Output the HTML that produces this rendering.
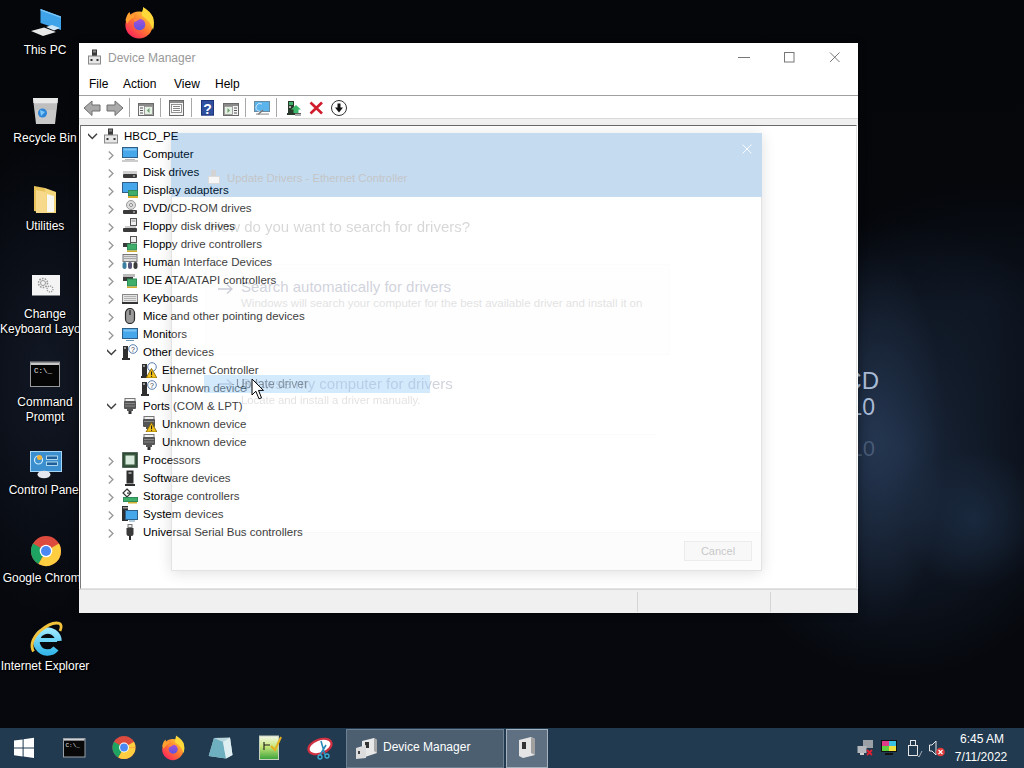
<!DOCTYPE html>
<html><head><meta charset="utf-8">
<style>
*{box-sizing:border-box}
html,body{margin:0;padding:0}
body{width:1024px;height:768px;overflow:hidden;position:relative;background:#05070b;font-family:"Liberation Sans",sans-serif;font-size:11.5px}
.a{position:absolute}
#bg{position:absolute;left:0;top:0;width:1024px;height:728px;
 background:
 radial-gradient(ellipse 70px 190px at 875px 440px, rgba(52,76,112,0.45), rgba(52,76,112,0) 100%),
 radial-gradient(ellipse 70px 70px at 975px 520px, rgba(40,66,100,0.4), rgba(40,66,100,0) 100%),
 radial-gradient(ellipse 200px 230px at 900px 450px, rgba(30,46,70,0.8), rgba(30,46,70,0) 100%),
 radial-gradient(ellipse 180px 120px at 990px 300px, rgba(18,28,44,0.5), rgba(18,28,44,0) 100%),
 radial-gradient(ellipse 110px 240px at 45px 380px, rgba(28,38,58,0.55), rgba(28,38,58,0) 100%),
 linear-gradient(#04060a,#06080d)}
.dl{position:absolute;color:#fff;font-size:12px;text-align:center;width:90px;left:0;line-height:14.5px;text-shadow:0 0 2px #000,1px 1px 1px #000;white-space:nowrap}
.ti{position:absolute;overflow:visible}
.row{position:absolute;height:18px;line-height:18px;color:#000;white-space:nowrap}
#win{position:absolute;left:79px;top:43px;width:779px;height:570px;background:#fff;box-shadow:0 0 8px rgba(0,0,0,.4)}
.menu{position:absolute;top:77px;color:#000;font-size:12px;line-height:15px}
.sep{position:absolute;top:101px;width:1px;height:16px;background:#c8c8c8}
#task{position:absolute;left:0;top:728px;width:1024px;height:40px;background:#213a50}
</style></head><body>
<div id="bg"></div>
<svg width="0" height="0" style="position:absolute">
<defs>
<symbol id="c-right" viewBox="0 0 10 16"><path d="M1.8 5.4 L5.9 9.5 L1.8 13.6" fill="none" stroke="#9a9a9a" stroke-width="1.4"/></symbol>
<symbol id="c-down" viewBox="0 0 10 16"><path d="M-0.4 5.8 L4.3 10.5 L9 5.8" fill="none" stroke="#404040" stroke-width="1.5"/></symbol>
<symbol id="i-pc" viewBox="0 0 16 16"><rect x="5" y="0.5" width="5" height="7" fill="#3a3a3a"/><rect x="6" y="1.5" width="3" height="2" fill="#888"/><rect x="1.5" y="7" width="13" height="8" fill="#e6e6e6" stroke="#8a8a8a"/><rect x="3.5" y="10" width="2" height="2" fill="#333"/><rect x="10.5" y="10" width="2" height="2" fill="#333"/></symbol>
<symbol id="i-computer" viewBox="0 0 16 16"><rect x="0.5" y="1.5" width="15" height="10" fill="#46a7ea" stroke="#2d5f88"/><rect x="1.5" y="2.5" width="13" height="2" fill="#7cc4f4"/><rect x="3" y="13" width="10" height="1" fill="#bbb"/><rect x="0" y="14.5" width="16" height="1" fill="#9a9a9a"/></symbol>
<symbol id="i-disk" viewBox="0 0 16 16"><rect x="1" y="7" width="14" height="3" fill="#d0d0d0"/><rect x="1" y="10" width="14" height="4" rx="1" fill="#3a3a3a"/><rect x="11" y="11.5" width="2" height="1" fill="#ddd"/></symbol>
<symbol id="i-display" viewBox="0 0 16 16"><rect x="0.5" y="0.5" width="15" height="10" fill="#46a7ea" stroke="#2d5f88"/><rect x="6" y="8" width="10" height="6" fill="#2e8b57"/><rect x="7" y="9" width="8" height="4" fill="#3fae6a"/><rect x="6" y="14" width="10" height="2" fill="#d4b030"/></symbol>
<symbol id="i-dvd" viewBox="0 0 16 16"><circle cx="9" cy="5" r="4.5" fill="#dcdcdc" stroke="#999"/><circle cx="9" cy="5" r="1.5" fill="#fff" stroke="#888"/><rect x="1" y="10" width="14" height="4" rx="1" fill="#3a3a3a"/><rect x="11" y="11.5" width="2" height="1" fill="#ddd"/></symbol>
<symbol id="i-floppy" viewBox="0 0 16 16"><rect x="8.5" y="0.5" width="6" height="7" fill="#eee" stroke="#555"/><rect x="9.5" y="1.5" width="4" height="2.5" fill="#bbb"/><rect x="1" y="10" width="14" height="4" rx="1" fill="#3a3a3a"/><rect x="3" y="8" width="11" height="2" fill="#ccc"/></symbol>
<symbol id="i-floppyctl" viewBox="0 0 16 16"><rect x="8.5" y="0.5" width="6" height="6" fill="#eee" stroke="#555"/><rect x="1" y="7" width="8" height="4" fill="#3a3a3a"/><rect x="5" y="7.5" width="10" height="7" fill="#2e8b57"/><rect x="6" y="8.5" width="8" height="5" fill="#3fae6a"/><rect x="5" y="14.5" width="10" height="1.5" fill="#d4b030"/></symbol>
<symbol id="i-hid" viewBox="0 0 16 16"><rect x="1" y="0.5" width="14" height="7" fill="#ddd" stroke="#777"/><path d="M2 2.5h12M2 4.5h12" stroke="#999" stroke-width="0.8"/><rect x="0.5" y="8" width="4" height="7" rx="2" fill="#3a7ea0"/><rect x="6" y="8" width="4" height="7" rx="2" fill="#557"/><rect x="11.5" y="8" width="4" height="7" rx="2" fill="#3a3a3a"/></symbol>
<symbol id="i-ide" viewBox="0 0 16 16"><rect x="1" y="2" width="12" height="3" fill="#bbb"/><rect x="1" y="5" width="10" height="4" fill="#3a3a3a"/><rect x="5" y="6.5" width="10" height="8" fill="#2e8b57"/><rect x="6" y="7.5" width="8" height="6" fill="#3fae6a"/><rect x="5" y="14.5" width="10" height="1.5" fill="#d4b030"/></symbol>
<symbol id="i-kbd" viewBox="0 0 16 16"><rect x="0.5" y="4.5" width="15" height="8" fill="#e4e4e4" stroke="#888"/><path d="M2 6.5h12M2 8.5h12M2 10.5h12" stroke="#aaa" stroke-width="0.9"/><rect x="0" y="12" width="16" height="2" fill="#333"/></symbol>
<symbol id="i-mouse" viewBox="0 0 16 16"><rect x="3.5" y="0.5" width="9" height="15" rx="4.5" fill="#9a9a9a" stroke="#2a2a2a" stroke-width="1.2"/><rect x="7.3" y="2" width="1.4" height="5" fill="#333"/></symbol>
<symbol id="i-monitor" viewBox="0 0 16 16"><rect x="0.5" y="2.5" width="15" height="10" fill="#46a7ea" stroke="#2d5f88"/><rect x="1.5" y="3.5" width="13" height="2" fill="#7cc4f4"/><rect x="4" y="14" width="8" height="1" fill="#6a9ab8"/></symbol>
<symbol id="i-other" viewBox="0 0 16 16"><rect x="1" y="2" width="5" height="12" fill="#2f2f2f"/><rect x="2" y="3" width="2" height="2" fill="#999"/><rect x="0" y="14" width="8" height="2" fill="#2f2f2f"/><circle cx="11" cy="5" r="4.3" fill="#fff" stroke="#5a7fb0"/><text x="11" y="7.8" font-size="7" text-anchor="middle" fill="#334" font-family="Liberation Sans">?</text></symbol>
<symbol id="i-otherwarn" viewBox="0 0 16 16"><rect x="1" y="2" width="5" height="12" fill="#2f2f2f"/><rect x="2" y="3" width="2" height="2" fill="#999"/><rect x="0" y="14" width="8" height="2" fill="#2f2f2f"/><circle cx="11" cy="5" r="4.3" fill="#fff" stroke="#5a7fb0"/><path d="M10.5 6.5 L16 16 L5 16 Z" fill="#f2c21a" stroke="#7a5a00" stroke-width="0.8"/><rect x="10" y="9.5" width="1.1" height="3.5" fill="#222"/><rect x="10" y="13.8" width="1.1" height="1.1" fill="#222"/></symbol>
<symbol id="i-port" viewBox="0 0 16 16"><rect x="3" y="0.5" width="10" height="3" fill="#eee" stroke="#777"/><rect x="2" y="3" width="12" height="8" rx="1" fill="#555"/><rect x="3" y="5" width="10" height="1" fill="#888"/><rect x="3" y="7.5" width="10" height="1" fill="#888"/><rect x="5" y="11" width="6" height="2" fill="#555"/><rect x="6.5" y="13" width="3" height="3" fill="#333"/></symbol>
<symbol id="i-portwarn" viewBox="0 0 16 16"><rect x="3" y="0.5" width="10" height="3" fill="#eee" stroke="#777"/><rect x="2" y="3" width="12" height="8" rx="1" fill="#555"/><rect x="3" y="5" width="10" height="1" fill="#888"/><rect x="5" y="11" width="6" height="2" fill="#555"/><rect x="6.5" y="13" width="3" height="3" fill="#333"/><path d="M10.5 6.5 L16 16 L5 16 Z" fill="#f2c21a" stroke="#7a5a00" stroke-width="0.8"/><rect x="10" y="9.5" width="1.1" height="3.5" fill="#222"/><rect x="10" y="13.8" width="1.1" height="1.1" fill="#222"/></symbol>
<symbol id="i-cpu" viewBox="0 0 16 16"><rect x="0.5" y="0.5" width="15" height="15" fill="#2c4a34" stroke="#1a2a1e" stroke-dasharray="1 1"/><rect x="2" y="2" width="12" height="12" fill="#3a5a40"/><rect x="3.5" y="3.5" width="9" height="9" fill="#d8eadc"/></symbol>
<symbol id="i-software" viewBox="0 0 16 16"><rect x="4.5" y="0.5" width="7" height="13" fill="#2f2f2f"/><rect x="6.5" y="2" width="3" height="2" fill="#999"/><rect x="3" y="14" width="10" height="2" fill="#2f2f2f"/></symbol>
<symbol id="i-storage" viewBox="0 0 16 16"><path d="M5 1 L9 5 L5 9 L1 5 Z" fill="none" stroke="#333" stroke-width="1.2"/><rect x="5" y="4.5" width="4" height="1.2" fill="#333"/><rect x="1" y="9" width="15" height="5" fill="#2e8b57"/><rect x="2" y="10" width="13" height="3" fill="#3fae6a"/><rect x="6" y="14" width="9" height="1.5" fill="#d4b030"/></symbol>
<symbol id="i-system" viewBox="0 0 16 16"><rect x="0" y="0" width="6" height="15" fill="#2f2f2f"/><rect x="1" y="1" width="5" height="1.5" fill="#999"/><rect x="3.5" y="4.5" width="12" height="9" fill="#46a7ea" stroke="#2d5f88"/><rect x="7" y="14.5" width="6" height="1" fill="#6a9ab8"/></symbol>
<symbol id="i-usb" viewBox="0 0 16 16"><rect x="6" y="0.5" width="4" height="3" fill="#eee" stroke="#777"/><path d="M4.5 4 H11.5 V10 Q11.5 12 9.5 12 H6.5 Q4.5 12 4.5 10 Z" fill="#3a3a3a"/><rect x="7" y="12" width="2" height="4" fill="#2a2a2a"/></symbol>
</defs></svg>

<svg class="a" style="left:0;top:0" width="170" height="680" viewBox="0 0 170 680">
 <defs>
  <linearGradient id="ffg" x1="0.9" y1="0.1" x2="0.2" y2="0.9"><stop offset="0" stop-color="#ffd23a"/><stop offset="0.5" stop-color="#ff7a30"/><stop offset="1" stop-color="#ff2a5a"/></linearGradient>
  <linearGradient id="ffp" x1="0.5" y1="0" x2="0.5" y2="1"><stop offset="0" stop-color="#a850d8"/><stop offset="1" stop-color="#5a56e0"/></linearGradient>
  <linearGradient id="ieg" x1="0" y1="0" x2="0" y2="1"><stop offset="0" stop-color="#9ae6fc"/><stop offset="1" stop-color="#38b8ea"/></linearGradient>
 </defs>
 <!-- This PC -->
 <polygon points="40.5,9 61,16.5 61,30 40.5,23" fill="#3fa3ea"/>
 <polygon points="40.5,9 61,16.5 61,18 40.5,10.5" fill="#79c6f6"/>
 <polygon points="31,31 44,27.5 56,32 43,36" fill="#e8e8e8"/>
 <polygon points="46,27 52,25 60,28 54,30.5" fill="#cfe6f6"/>
 <!-- Firefox -->
 <circle cx="139" cy="25" r="13.6" fill="url(#ffg)"/>
 <path d="M142 12 Q143.5 8.5 143 7 Q150 11 153 17 Q155 23 153 30 Q150 20 142 16 Z" fill="#ffd83a"/>
 <path d="M125.5 20 Q127 14 129.5 12 L131 16 L133 13.5 L134.5 17 Q130 19 127 24 Z" fill="#ffa030"/>
 <circle cx="139.5" cy="24.5" r="5.8" fill="url(#ffp)"/>
 <path d="M133 19.5 Q136 17 141 18.5 Q138 20 135 22 Z" fill="#ff8a3a"/>
 <!-- Recycle bin -->
 <polygon points="33,98 58,98 55,124 36,124" fill="#c9c9c9"/>
 <polygon points="33,98 58,98 57.5,103 33.5,103" fill="#e8e8e8"/>
 <polygon points="34,104 57,104 56,110 35,110" fill="#b8b8b8" opacity="0.6"/>
 <circle cx="42.5" cy="113" r="4.5" fill="#2f86d8"/>
 <path d="M40 110 L45 112 L41 116 Z" fill="#7cc8f8"/>
 <!-- Utilities folder -->
 <polygon points="34,186 45,188 45,213 34,211" fill="#e8c35a"/>
 <polygon points="45,188 56,192 56,213 45,213" fill="#f4d67c"/>
 <polygon points="47,194 54,196 54,212 47,212" fill="#f8f8f0"/>
 <polygon points="36,190 46,192 46,213 36,213" fill="#f6d98a"/>
 <!-- Change KB layout -->
 <rect x="32" y="275" width="28" height="20.5" fill="#f4f4f4"/>
 <circle cx="43" cy="283" r="4.5" fill="none" stroke="#9a9a9a" stroke-width="1.6" stroke-dasharray="1.6 1.2"/>
 <circle cx="43" cy="283" r="2.5" fill="none" stroke="#9a9a9a" stroke-width="1"/>
 <circle cx="50" cy="289" r="3" fill="none" stroke="#9a9a9a" stroke-width="1.3" stroke-dasharray="1.3 1"/>
 <!-- cmd -->
 <rect x="30.5" y="362" width="29" height="24.5" fill="#050505" stroke="#9a9a9a" stroke-width="1"/>
 <rect x="31" y="362.5" width="28" height="2.5" fill="#c8c8c8"/>
 <text x="34" y="373" font-family="Liberation Mono" font-size="7.5" fill="#e6e6e6">C:\_</text>
 <!-- Control panel -->
 <rect x="30.5" y="451.5" width="31" height="20" fill="#3b8fcf" stroke="#a9d6f6" stroke-width="1"/>
 <circle cx="38.5" cy="460" r="4" fill="none" stroke="#cfeefc" stroke-width="1.2"/>
 <circle cx="39.5" cy="457.5" r="2.5" fill="#f2b43a"/>
 <rect x="46.5" y="456" width="11" height="3.5" fill="#1e5f9a" stroke="#cfeefc" stroke-width="0.8"/>
 <rect x="46.5" y="462" width="11" height="3.5" fill="#1e5f9a" stroke="#cfeefc" stroke-width="0.8"/>
 <ellipse cx="44" cy="474.5" rx="6.5" ry="3.8" fill="#e6e6ee"/>
 <!-- Chrome -->
 <circle cx="46" cy="551" r="15" fill="#dd4b3e"/>
 <path d="M46 551 L33 543.5 A15 15 0 0 0 38.5 564 Z" fill="#1ea362"/>
 <path d="M46 551 L38.5 564 A15 15 0 0 0 61 551 Z" fill="#ffcd40"/>
 <path d="M46 551 L59 543.5 A15 15 0 0 1 61 551 Z" fill="#ffcd40"/>
 <circle cx="46" cy="551" r="6.3" fill="#fff"/>
 <circle cx="46" cy="551" r="5" fill="#4a89f3"/>
 <!-- IE -->
 <path d="M58.5 641 A11 11 0 1 0 56 648.5" fill="none" stroke="url(#ieg)" stroke-width="6.5"/>
 <rect x="39" y="638" width="18" height="4" fill="#70d4f6"/>
 <path d="M33.5 651.5 Q28.5 642 40 631 Q52 621 59.5 623.5 Q62.5 625.5 60 631" fill="none" stroke="#f2c23a" stroke-width="2.8"/>
</svg>

<!-- desktop labels -->
<div class="dl" style="top:43px">This PC</div>
<div class="dl" style="top:131px">Recycle Bin</div>
<div class="dl" style="top:219px">Utilities</div>
<div class="dl" style="top:307px">Change<br>Keyboard Layout</div>
<div class="dl" style="top:395px">Command<br>Prompt</div>
<div class="dl" style="top:483px">Control Panel</div>
<div class="dl" style="top:571px">Google Chrome</div>
<div class="dl" style="top:659px">Internet Explorer</div>

<div class="a" style="left:780px;top:366px;width:99px;text-align:right;color:rgba(195,214,240,0.85);font-size:24px;line-height:30px;white-space:nowrap">CD</div>
<div class="a" style="left:780px;top:393px;width:95px;text-align:right;color:rgba(195,214,240,0.85);font-size:23px;line-height:28px;white-space:nowrap">10</div>
<div class="a" style="left:780px;top:436px;width:95px;text-align:right;color:rgba(120,140,170,0.45);font-size:22px;line-height:26px;white-space:nowrap">10</div>
<div id="win"></div>
<div class="a" style="left:108px;top:51px;color:#999;font-size:12px;line-height:15px">Device Manager</div>
<svg class="a" style="left:87px;top:49px" width="16" height="16"><rect x="5" y="0.5" width="5" height="7" fill="#3a3a3a"/><rect x="6" y="1.5" width="3" height="2" fill="#888"/><rect x="1.5" y="7" width="12" height="8" fill="#e6e6e6" stroke="#8a8a8a"/><rect x="3.5" y="10" width="2" height="2" fill="#333"/><rect x="9.5" y="10" width="2" height="2" fill="#333"/></svg>
<svg class="a" style="left:735px;top:48px" width="110" height="18" viewBox="735 48 110 18"><rect x="738" y="57" width="12" height="1" fill="#777"/><rect x="784.5" y="52.5" width="9.5" height="9.5" fill="none" stroke="#777" stroke-width="1"/><path d="M830 52.5 L839.5 62 M839.5 52.5 L830 62" stroke="#777" stroke-width="1"/></svg>
<div class="menu" style="left:89px">File</div>
<div class="menu" style="left:123px">Action</div>
<div class="menu" style="left:174px">View</div>
<div class="menu" style="left:215px">Help</div>
<div class="a" style="left:79px;top:95px;width:779px;height:1px;background:#a0a0a0"></div>
<div class="a" style="left:79px;top:118px;width:779px;height:1px;background:#d8d8d8"></div>
<div class="a" style="left:79px;top:119px;width:779px;height:6px;background:#f0f0f0"></div>
<div class="a" style="left:80px;top:125px;width:777px;height:464px;border-top:1px solid #6a6a6a;border-left:1px solid #7a7a7a;border-right:1px solid #e3e3e3;border-bottom:1px solid #e3e3e3;background:#fff"></div>
<div class="a" style="left:79px;top:589px;width:779px;height:24px;background:#f0f0f0;border-top:1px solid #d9d9d9"></div>
<div class="a" style="left:637px;top:592px;width:1px;height:20px;background:#d5d5d5"></div>
<div class="a" style="left:770px;top:592px;width:1px;height:20px;background:#d5d5d5"></div>
<svg class="a" style="left:80px;top:96px" width="280" height="23" viewBox="80 96 280 23">
 <path d="M84 108 L92 101 V105 H100 V111 H92 V115.5 Z" fill="#a9a9a9" stroke="#6e6e6e" stroke-width="1" stroke-linejoin="round"/>
 <path d="M123 108 L115 101 V105 H107 V111 H115 V115.5 Z" fill="#a9a9a9" stroke="#6e6e6e" stroke-width="1" stroke-linejoin="round"/>
 <rect x="129" y="98" width="1" height="19" fill="#a8a8a8"/>
 <rect x="160" y="98" width="1" height="19" fill="#a8a8a8"/>
 <rect x="191" y="98" width="1" height="19" fill="#a8a8a8"/>
 <rect x="245" y="98" width="1" height="19" fill="#a8a8a8"/>
 <rect x="276" y="98" width="1" height="19" fill="#a8a8a8"/>
 <!-- icon3 -->
 <rect x="138.5" y="103.5" width="15" height="12" fill="#f4f4f4" stroke="#6a6a6a"/>
 <rect x="139" y="104" width="14" height="2" fill="#8a8a8a"/>
 <rect x="144.5" y="106.5" width="8" height="8" fill="#e4f0e4" stroke="#8a8a8a" stroke-width="0.8"/>
 <path d="M140 108h3M140 110.5h3M140 113h3" stroke="#555" stroke-width="1"/>
 <path d="M149.5 108 L147 110.5 L149.5 113 Z" fill="#6a9a6a"/>
 <!-- icon4 properties -->
 <rect x="169.5" y="100.5" width="14" height="15" fill="#f6f6f6" stroke="#6a6a6a"/>
 <rect x="170" y="101" width="13" height="2" fill="#8a8a8a"/>
 <rect x="171.5" y="104.5" width="10" height="8" fill="#fff" stroke="#7a7a7a" stroke-width="0.8"/>
 <path d="M173 106.5h7M173 108.5h7M173 110.5h7" stroke="#777" stroke-width="0.9"/>
 <!-- help -->
 <rect x="201" y="100" width="13" height="15.5" fill="#2f4f9f"/>
 <rect x="201.5" y="100.5" width="12" height="14.5" fill="none" stroke="#1e357a"/>
 <text x="207.5" y="113.5" font-size="14" font-weight="bold" text-anchor="middle" fill="#fff" font-family="Liberation Sans">?</text>
 <!-- action pane -->
 <rect x="223.5" y="103.5" width="15" height="12" fill="#f4f4f4" stroke="#6a6a6a"/>
 <rect x="224" y="104" width="14" height="2" fill="#8a8a8a"/>
 <rect x="224.5" y="106.5" width="8" height="8" fill="#e4f0e4" stroke="#8a8a8a" stroke-width="0.8"/>
 <path d="M234 108h3M234 110.5h3M234 113h3" stroke="#555" stroke-width="1"/>
 <path d="M227.5 108 L230 110.5 L227.5 113 Z" fill="#6a9a6a"/>
 <!-- scan monitor -->
 <rect x="254.5" y="101.5" width="15" height="10" fill="#5cb4ec" stroke="#6a8aa0"/>
 <path d="M262 104 A4 4 0 1 0 263 110" fill="none" stroke="#c8e6fa" stroke-width="1"/>
 <path d="M258 114.5 L263 110" stroke="#777" stroke-width="1.5"/>
 <rect x="256" y="113.5" width="13" height="1.2" fill="#999"/>
 <!-- update driver -->
 <rect x="288" y="101" width="6" height="12" fill="#2a3a2a"/>
 <rect x="289" y="102" width="4" height="3" fill="#3fae6a"/>
 <rect x="289" y="106" width="2" height="2" fill="#aaa"/>
 <rect x="287" y="113" width="8" height="2" fill="#2a3a2a"/>
 <path d="M296 105 L301 109.5 H298.5 V113 H293.5 V109.5 H291 Z" fill="#3cb86a"/>
 <path d="M295 113.5h6M295 115h6" stroke="#333" stroke-width="0.8"/>
 <!-- red X -->
 <path d="M310.5 102.5 L322 113.5 M322 102.5 L310.5 113.5" stroke="#d01c2c" stroke-width="2.6"/>
 <!-- down circle -->
 <circle cx="339" cy="108" r="7.5" fill="#fff" stroke="#333" stroke-width="1"/>
 <path d="M337.5 103.5 H340.5 V107.5 H343 L339 112.5 L335 107.5 H337.5 Z" fill="#111"/>
</svg>

<div class="row" style="left:124px;top:127px">HBCD_PE</div>
<svg class="ti" style="left:103px;top:128px" width="16" height="16"><use href="#i-pc"/></svg>
<svg class="ti" style="left:88px;top:128px" width="10" height="16"><use href="#c-down"/></svg>
<div class="row" style="left:143px;top:145px">Computer</div>
<svg class="ti" style="left:122px;top:146px" width="16" height="16"><use href="#i-computer"/></svg>
<svg class="ti" style="left:107px;top:146px" width="10" height="16"><use href="#c-right"/></svg>
<div class="row" style="left:143px;top:163px">Disk drives</div>
<svg class="ti" style="left:122px;top:164px" width="16" height="16"><use href="#i-disk"/></svg>
<svg class="ti" style="left:107px;top:164px" width="10" height="16"><use href="#c-right"/></svg>
<div class="row" style="left:143px;top:181px">Display adapters</div>
<svg class="ti" style="left:122px;top:182px" width="16" height="16"><use href="#i-display"/></svg>
<svg class="ti" style="left:107px;top:182px" width="10" height="16"><use href="#c-right"/></svg>
<div class="row" style="left:143px;top:199px">DVD/CD-ROM drives</div>
<svg class="ti" style="left:122px;top:200px" width="16" height="16"><use href="#i-dvd"/></svg>
<svg class="ti" style="left:107px;top:200px" width="10" height="16"><use href="#c-right"/></svg>
<div class="row" style="left:143px;top:217px">Floppy disk drives</div>
<svg class="ti" style="left:122px;top:218px" width="16" height="16"><use href="#i-floppy"/></svg>
<svg class="ti" style="left:107px;top:218px" width="10" height="16"><use href="#c-right"/></svg>
<div class="row" style="left:143px;top:235px">Floppy drive controllers</div>
<svg class="ti" style="left:122px;top:236px" width="16" height="16"><use href="#i-floppyctl"/></svg>
<svg class="ti" style="left:107px;top:236px" width="10" height="16"><use href="#c-right"/></svg>
<div class="row" style="left:143px;top:253px">Human Interface Devices</div>
<svg class="ti" style="left:122px;top:254px" width="16" height="16"><use href="#i-hid"/></svg>
<svg class="ti" style="left:107px;top:254px" width="10" height="16"><use href="#c-right"/></svg>
<div class="row" style="left:143px;top:271px">IDE ATA/ATAPI controllers</div>
<svg class="ti" style="left:122px;top:272px" width="16" height="16"><use href="#i-ide"/></svg>
<svg class="ti" style="left:107px;top:272px" width="10" height="16"><use href="#c-right"/></svg>
<div class="row" style="left:143px;top:289px">Keyboards</div>
<svg class="ti" style="left:122px;top:290px" width="16" height="16"><use href="#i-kbd"/></svg>
<svg class="ti" style="left:107px;top:290px" width="10" height="16"><use href="#c-right"/></svg>
<div class="row" style="left:143px;top:307px">Mice and other pointing devices</div>
<svg class="ti" style="left:122px;top:308px" width="16" height="16"><use href="#i-mouse"/></svg>
<svg class="ti" style="left:107px;top:308px" width="10" height="16"><use href="#c-right"/></svg>
<div class="row" style="left:143px;top:325px">Monitors</div>
<svg class="ti" style="left:122px;top:326px" width="16" height="16"><use href="#i-monitor"/></svg>
<svg class="ti" style="left:107px;top:326px" width="10" height="16"><use href="#c-right"/></svg>
<div class="row" style="left:143px;top:343px">Other devices</div>
<svg class="ti" style="left:122px;top:344px" width="16" height="16"><use href="#i-other"/></svg>
<svg class="ti" style="left:107px;top:344px" width="10" height="16"><use href="#c-down"/></svg>
<div class="row" style="left:162px;top:361px">Ethernet Controller</div>
<svg class="ti" style="left:141px;top:362px" width="16" height="16"><use href="#i-otherwarn"/></svg>
<div class="row" style="left:162px;top:379px">Unknown device</div>
<svg class="ti" style="left:141px;top:380px" width="16" height="16"><use href="#i-other"/></svg>
<div class="row" style="left:143px;top:397px">Ports (COM &amp; LPT)</div>
<svg class="ti" style="left:122px;top:398px" width="16" height="16"><use href="#i-port"/></svg>
<svg class="ti" style="left:107px;top:398px" width="10" height="16"><use href="#c-down"/></svg>
<div class="row" style="left:162px;top:415px">Unknown device</div>
<svg class="ti" style="left:141px;top:416px" width="16" height="16"><use href="#i-portwarn"/></svg>
<div class="row" style="left:162px;top:433px">Unknown device</div>
<svg class="ti" style="left:141px;top:434px" width="16" height="16"><use href="#i-port"/></svg>
<div class="row" style="left:143px;top:451px">Processors</div>
<svg class="ti" style="left:122px;top:452px" width="16" height="16"><use href="#i-cpu"/></svg>
<svg class="ti" style="left:107px;top:452px" width="10" height="16"><use href="#c-right"/></svg>
<div class="row" style="left:143px;top:469px">Software devices</div>
<svg class="ti" style="left:122px;top:470px" width="16" height="16"><use href="#i-software"/></svg>
<svg class="ti" style="left:107px;top:470px" width="10" height="16"><use href="#c-right"/></svg>
<div class="row" style="left:143px;top:487px">Storage controllers</div>
<svg class="ti" style="left:122px;top:488px" width="16" height="16"><use href="#i-storage"/></svg>
<svg class="ti" style="left:107px;top:488px" width="10" height="16"><use href="#c-right"/></svg>
<div class="row" style="left:143px;top:505px">System devices</div>
<svg class="ti" style="left:122px;top:506px" width="16" height="16"><use href="#i-system"/></svg>
<svg class="ti" style="left:107px;top:506px" width="10" height="16"><use href="#c-right"/></svg>
<div class="row" style="left:143px;top:523px">Universal Serial Bus controllers</div>
<svg class="ti" style="left:122px;top:524px" width="16" height="16"><use href="#i-usb"/></svg>
<svg class="ti" style="left:107px;top:524px" width="10" height="16"><use href="#c-right"/></svg>

<div class="a" style="left:0;top:0;width:1024px;height:768px;opacity:0.235">
 <div class="a" style="left:171px;top:133px;width:591px;height:438px;background:#fff;box-shadow:0 2px 14px rgba(0,0,0,0.55);border:1px solid #888"></div>
 <div class="a" style="left:171px;top:133px;width:591px;height:64px;background:#0064be"></div>
 <svg class="a" style="left:740px;top:142px" width="14" height="14"><path d="M2.5 2.5 L11.5 11.5 M11.5 2.5 L2.5 11.5" stroke="#fff" stroke-width="0.9"/></svg>
 <svg class="a" style="left:208px;top:170px" width="12" height="14"><rect x="3" y="0" width="5" height="6" fill="#444"/><rect x="0.5" y="6.5" width="11" height="7" fill="#ddd" stroke="#666"/></svg>
 <div class="a" style="left:227px;top:171px;font-size:11.3px;line-height:15px;color:#000;white-space:nowrap">Update Drivers - Ethernet Controller</div>
 <div class="a" style="left:210px;top:218px;font-size:15px;line-height:18px;color:#555;white-space:nowrap">How do you want to search for drivers?</div>
 <div class="a" style="left:205px;top:264px;width:465px;height:91px;background:#f8f8f8;border:1px solid #f0f0f0"></div>
 <svg class="a" style="left:217px;top:283px" width="18" height="12"><path d="M1 6 H15 M10 1.5 L15 6 L10 10.5" fill="none" stroke="#1e2a58" stroke-width="1.3"/></svg>
 <div class="a" style="left:241px;top:278px;font-size:15px;line-height:18px;color:#34406a;white-space:nowrap">Search automatically for drivers</div>
 <div class="a" style="left:241px;top:296px;font-size:11.5px;line-height:14px;color:#808080;white-space:nowrap">Windows will search your computer for the best available driver and install it on</div>
 <svg class="a" style="left:217px;top:378px" width="18" height="12"><path d="M1 6 H15 M10 1.5 L15 6 L10 10.5" fill="none" stroke="#1e2a58" stroke-width="1.3"/></svg>
 <div class="a" style="left:241px;top:375px;font-size:15px;line-height:18px;color:#34406a;white-space:nowrap">Browse my computer for drivers</div>
 <div class="a" style="left:241px;top:393px;font-size:11.3px;line-height:14px;color:#808080;white-space:nowrap">Locate and install a driver manually.</div>
 <div class="a" style="left:205px;top:434px;width:452px;height:1px;background:#ebebeb"></div>
 <div class="a" style="left:172px;top:532px;width:589px;height:38px;background:#f0f0f0;border-top:1px solid #dfdfdf"></div>
 <div class="a" style="left:684px;top:541px;width:68px;height:20px;background:#e1e1e1;border:1px solid #adadad;font-size:11px;line-height:18px;text-align:center;color:#000">Cancel</div>
</div>
<div class="a" style="left:204px;top:375px;width:226px;height:18px;background:#91c9f7;opacity:0.4"></div>
<div class="a" style="left:236px;top:377px;font-size:12px;line-height:15px;color:#000;opacity:0.36;white-space:nowrap">Update driver</div>
<svg class="a" style="left:251px;top:378px" width="15" height="23"><path d="M1 1 V17 L4.8 13.2 L8 20.8 L10.5 19.8 L7.5 12.4 L12.5 12.4 Z" fill="#fff" stroke="#000" stroke-width="1" stroke-linejoin="miter"/></svg>

<div id="task"></div>
<svg class="a" style="left:0;top:728px" width="1024" height="40" viewBox="0 728 1024 40">
 <defs>
  <radialGradient id="tffg" cx="45%" cy="60%" r="60%"><stop offset="0" stop-color="#ffbd3a"/><stop offset="0.55" stop-color="#ff5a36"/><stop offset="1" stop-color="#e3164e"/></radialGradient>
  <linearGradient id="npg" x1="0" y1="0" x2="0" y2="1"><stop offset="0" stop-color="#f4f8e8"/><stop offset="0.45" stop-color="#c8e67a"/><stop offset="1" stop-color="#3aa23a"/></linearGradient>
 </defs>
 <!-- win logo -->
 <polygon points="14,740.6 22.6,739.4 22.6,747.4 14,747.4" fill="#fff"/>
 <polygon points="23.6,739.2 34,737.8 34,747.4 23.6,747.4" fill="#fff"/>
 <polygon points="14,748.4 22.6,748.4 22.6,756.5 14,755.3" fill="#fff"/>
 <polygon points="23.6,748.4 34,748.4 34,758 23.6,756.6" fill="#fff"/>
 <!-- cmd -->
 <rect x="63.5" y="738.5" width="21.5" height="18.5" fill="#080808" stroke="#9aa0a6" stroke-width="1"/>
 <rect x="64" y="739" width="20.5" height="1.6" fill="#cfd3d6"/>
 <text x="65.5" y="746.5" font-family="Liberation Mono" font-size="6" fill="#e6e6e6">C:\_</text>
 <!-- chrome -->
 <circle cx="124" cy="747.5" r="11.5" fill="#dd4b3e"/>
 <path d="M124 747.5 L114 741.75 A11.5 11.5 0 0 0 118.25 757.46 Z" fill="#1ea362"/>
 <path d="M124 747.5 L118.25 757.46 A11.5 11.5 0 0 0 135.5 747.5 Z" fill="#ffcd40"/>
 <path d="M124 747.5 L134 741.75 A11.5 11.5 0 0 1 135.5 747.5 Z" fill="#ffcd40"/>
 <circle cx="124" cy="747.5" r="4.9" fill="#fff"/>
 <circle cx="124" cy="747.5" r="3.9" fill="#4a89f3"/>
 <!-- firefox -->
 <g transform="translate(172.8 748) scale(0.78) translate(-139 -23)">
 <circle cx="139" cy="25" r="13.6" fill="url(#ffg)"/>
 <path d="M142 12 Q143.5 8.5 143 7 Q150 11 153 17 Q155 23 153 30 Q150 20 142 16 Z" fill="#ffd83a"/>
 <path d="M125.5 20 Q127 14 129.5 12 L131 16 L133 13.5 L134.5 17 Q130 19 127 24 Z" fill="#ffa030"/>
 <circle cx="139.5" cy="24.5" r="5.8" fill="url(#ffp)"/>
 <path d="M133 19.5 Q136 17 141 18.5 Q138 20 135 22 Z" fill="#ff8a3a"/>
 </g>
 <!-- notepad blue -->
 <polygon points="214,738 230,737.5 232.5,755 226,758.5 208.7,756" fill="#b8d6dc"/>
 <polygon points="214,738 223,742 226,758.5 208.7,756" fill="#6fb0c0"/>
 <polygon points="223,742 230,737.5 232.5,755 226,758.5" fill="#dfeef0"/>
 <!-- green notepad -->
 <rect x="259.5" y="736" width="19" height="23.5" fill="url(#npg)" stroke="#c8d0c0" stroke-width="1"/>
 <path d="M264 742 V750 M264 745 H270" stroke="#1a1a1a" stroke-width="1.1"/>
 <path d="M271 746 L275 750 L281 737" fill="none" stroke="#e6b020" stroke-width="2"/>
 <!-- snipping tool -->
 <ellipse cx="320" cy="746.5" rx="12" ry="7" transform="rotate(-20 320 746.5)" fill="#fff" stroke="#d03040" stroke-width="2.2"/>
 <path d="M321 741 L325 755 M326 745 L320 755" stroke="#2a8ab8" stroke-width="1.6"/>
 <circle cx="320" cy="757" r="2" fill="none" stroke="#3ab0d8" stroke-width="1.3"/>
 <circle cx="327" cy="756" r="2" fill="none" stroke="#3ab0d8" stroke-width="1.3"/>
 <!-- DM button -->
 <rect x="346.5" y="729.5" width="157" height="38" fill="#4b5f71" stroke="#6d8092" stroke-width="1"/>
 <polygon points="362,741 374,738 377,740 377,753 365,757 362,755" fill="#e8e8e8"/>
 <polygon points="374,738 377,740 377,753 374,751" fill="#a8a8a8"/>
 <rect x="365" y="742" width="4" height="6" fill="#333"/>
 <polygon points="356,748 366,745 366,758 356,759" fill="#dcdcdc"/>
 <rect x="358" y="751" width="2" height="3" fill="#444"/>
 <!-- second button -->
 <rect x="506.5" y="729.5" width="41" height="38" fill="#5e7082" stroke="#a6b2bd" stroke-width="1"/>
 <polygon points="519,740 531,737 535,739 535,755 523,758 519,756" fill="#e4e4e4"/>
 <polygon points="531,737 535,739 535,755 531,753" fill="#a0a0a0"/>
 <rect x="522" y="742" width="4" height="7" fill="#333"/>
 <!-- tray -->
 <rect x="863" y="740" width="10" height="8" fill="#9aa0a6"/>
 <rect x="857.5" y="746" width="9" height="7" fill="#b4b8bc"/>
 <rect x="860" y="753" width="4" height="2" fill="#d0d0d0"/>
 <path d="M867 750 L872 755 M872 750 L867 755" stroke="#e02030" stroke-width="1.8"/>
 <rect x="881" y="740" width="16" height="12" fill="#111"/>
 <rect x="882" y="741" width="14" height="10" fill="#f0a030"/>
 <rect x="882" y="741" width="7" height="5" fill="#e03a8a"/>
 <rect x="889" y="741" width="7" height="5" fill="#3ac0e0"/>
 <rect x="882" y="746" width="7" height="5" fill="#60d040"/>
 <rect x="889" y="746" width="7" height="5" fill="#f0e040"/>
 <rect x="885" y="753" width="8" height="2" fill="#111"/>
 <rect x="908.5" y="745.5" width="9" height="10" fill="none" stroke="#e6e6e6" stroke-width="1"/>
 <rect x="910.5" y="740.5" width="5" height="5" fill="none" stroke="#e6e6e6" stroke-width="1"/>
 <path d="M917 755 L919 757 L922 751" fill="none" stroke="#b0b8c0" stroke-width="0.9"/>
 <path d="M929.5 745 H932 L936 741 V755 L932 751 H929.5 Z" fill="none" stroke="#e6e6e6" stroke-width="1"/>
 <circle cx="940.5" cy="752" r="4.3" fill="#e03a3a"/>
 <path d="M938.5 750 L942.5 754 M942.5 750 L938.5 754" stroke="#fff" stroke-width="1.1"/>
</svg>
<div class="a" style="left:383px;top:740px;color:#fff;font-size:12px;line-height:15px;white-space:nowrap">Device Manager</div>
<div class="a" style="left:950px;top:732px;width:64px;text-align:center;color:#fff;font-size:12px;line-height:15px;white-space:nowrap">6:45 AM</div>
<div class="a" style="left:950px;top:750px;width:62px;text-align:center;color:#fff;font-size:12px;line-height:15px;white-space:nowrap">7/11/2022</div>

</body></html>
